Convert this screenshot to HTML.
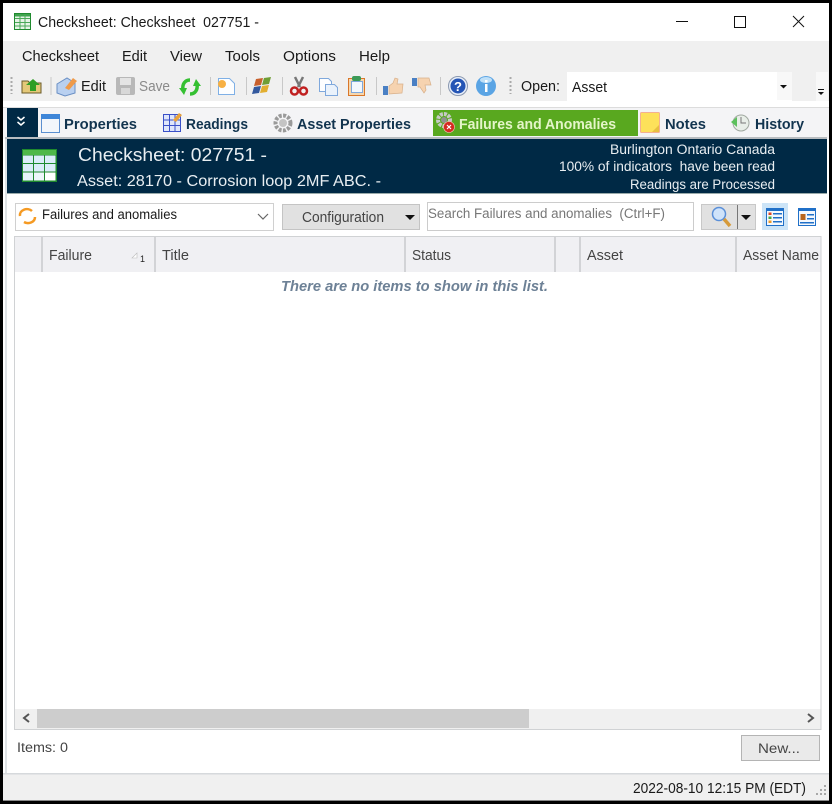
<!DOCTYPE html>
<html><head><meta charset="utf-8"><style>
html,body{margin:0;padding:0;background:#000;width:832px;height:804px;overflow:hidden}
svg{display:block;position:absolute;left:0;top:0;filter:blur(.35px)}
text{font-family:"Liberation Sans",sans-serif;fill:#1a1a1a;font-size:14.5px;white-space:pre}
.tab{font-weight:bold;fill:#12344f;font-size:15px}
.w{fill:#e8eef2}
.g{fill:#444}
</style></head><body>
<svg width="832" height="804" viewBox="0 0 832 804">
<rect width="832" height="804" fill="#000"/>
<rect x="3" y="3" width="826" height="798" fill="#fff"/>
<rect x="3" y="41" width="826" height="60" fill="#f0f0f0"/>
<rect x="3" y="107" width="826" height="32" fill="#f4f4f6"/>
<rect x="3" y="107" width="826" height="1" fill="#dcdcdc"/>
<rect x="5" y="137" width="822" height="2" fill="#b8bcc0"/>
<rect x="5" y="139" width="2" height="635" fill="#dfe3e6"/>
<rect x="7" y="139" width="820" height="54" fill="#002945"/>
<rect x="7" y="193" width="820" height="1" fill="#9aa"/>
<rect x="3" y="773" width="826" height="27" fill="#f0f0f0"/>
<rect x="3" y="773" width="826" height="1.5" fill="#d6d9dc"/>
<rect x="3" y="800" width="826" height="1" fill="#888"/>

<!-- title -->
<rect x="14.500" y="13.500" width="16" height="16" fill="#e6f3e6" stroke="#1f8a2e"/>
<rect x="15" y="14" width="15" height="2.500" fill="#3fa34d"/>
<path d="M15 18.500H30M15 22.500H30M15 26H30M20 14V29M25 14V29" stroke="#4aa858" fill="none"/>
<text x="38" y="27" textLength="221" lengthAdjust="spacingAndGlyphs">Checksheet: Checksheet  027751 -</text>
<path d="M676 21.500H688" stroke="#111"/>
<rect x="734.500" y="16.500" width="11" height="11" fill="none" stroke="#111"/>
<path d="M793 16L804 27M804 16L793 27" stroke="#111" fill="none"/>

<!-- menu -->
<text x="22" y="61" textLength="77" lengthAdjust="spacingAndGlyphs">Checksheet</text>
<text x="122" y="61" textLength="25" lengthAdjust="spacingAndGlyphs">Edit</text>
<text x="170" y="61" textLength="32" lengthAdjust="spacingAndGlyphs">View</text>
<text x="225" y="61" textLength="35" lengthAdjust="spacingAndGlyphs">Tools</text>
<text x="283" y="61" textLength="53" lengthAdjust="spacingAndGlyphs">Options</text>
<text x="359" y="61" textLength="31" lengthAdjust="spacingAndGlyphs">Help</text>

<!-- toolbar -->
<path d="M11.500 77V94" stroke="#aaa" stroke-dasharray="2 2" stroke-width="2"/>
<path d="M22 81h6l2 2h11v10H22z" fill="#e4c878" stroke="#6a5a28"/>
<path d="M30 91v-6h-4l7-6 7 6h-4v6z" fill="#2f9e25"/>
<rect x="50.500" y="77" width="1" height="18" fill="#c8c8c8"/>
<path d="M57 84l10-6 8 5v10l-10 3-8-3z" fill="#b9d0f0" stroke="#6a8fc4"/>
<path d="M65 88l8-10 4 3-8 9z" fill="#ee9a4a"/>
<text x="81" y="91" textLength="25" lengthAdjust="spacingAndGlyphs">Edit</text>
<rect x="116" y="77" width="19" height="18" rx="2" fill="#b8b8b8"/>
<rect x="120" y="78" width="11" height="7" fill="#e4e4e4"/>
<rect x="121" y="88" width="9" height="6" fill="#d8d8d8"/>
<text x="139" y="91" textLength="31" lengthAdjust="spacingAndGlyphs" style="fill:#8a8a8a">Save</text>
<path d="M190 80c-5 0-8 4-7 10" stroke="#35c032" stroke-width="3.500" fill="none"/>
<path d="M179 88l8 0-3 7z" fill="#35c032"/>
<path d="M190 94c5 0 8-4 7-10" stroke="#35c032" stroke-width="3.500" fill="none"/>
<path d="M201 86l-8 0 3-7z" fill="#35c032"/>
<rect x="210" y="77" width="1" height="18" fill="#c8c8c8"/>
<path d="M218.500 78.500h11l5 5v11h-16z" fill="#fdfeff" stroke="#7fb0e6"/>
<circle cx="222" cy="84" r="4" fill="#f7b043"/>
<rect x="246" y="77" width="1" height="18" fill="#c8c8c8"/>
<path d="M254 86l2-7 7-1-2 7z" fill="#c8602c"/><path d="M262 85l2-7 7-1-2 7z" fill="#6f9e35"/>
<path d="M252 94l2-7 7-1-2 7z" fill="#33599e"/><path d="M260 93l2-7 7-1-2 7z" fill="#e2ae30"/>
<rect x="282" y="77" width="1" height="18" fill="#c8c8c8"/>
<path d="M295 77l5 10M303 77l-5 10" stroke="#777" stroke-width="2.500" fill="none"/>
<circle cx="294.500" cy="91" r="3.500" fill="none" stroke="#c02020" stroke-width="2.500"/>
<circle cx="303.500" cy="91" r="3.500" fill="none" stroke="#c02020" stroke-width="2.500"/>
<path d="M319.500 78.500h9l3 3v10h-12z" fill="#fdfeff" stroke="#7fa8dc"/>
<path d="M325.500 84.500h9l3 3v8h-12z" fill="#eaf2fb" stroke="#7fa8dc"/>
<rect x="348.500" y="78.500" width="16" height="17" fill="#f6d7ae" stroke="#d9772a"/>
<rect x="351.500" y="81.500" width="11" height="11" fill="#f4f8fd" stroke="#7fa8dc"/>
<rect x="352" y="76" width="9" height="5" rx="2" fill="#3c9a58"/>
<rect x="376" y="77" width="1" height="18" fill="#c8c8c8"/>
<rect x="383" y="86" width="5" height="9" fill="#4a80c4"/>
<path d="M389 86l4-3 2-5 3 1-1 5h6l-1 9-13 1z" fill="#f6d3b0" stroke="#d8b08a" stroke-width=".7"/>
<rect x="412" y="78" width="5" height="8" fill="#4a80c4"/>
<path d="M418 78h11l2 7h-6l1 5-2 3-4-6h-2z" fill="#f6d3b0" stroke="#d8b08a" stroke-width=".7"/>
<rect x="440" y="77" width="1" height="18" fill="#c8c8c8"/>
<circle cx="458" cy="86" r="9.500" fill="#e8eef8" stroke="#8a98b0"/>
<circle cx="458" cy="86" r="7.500" fill="#2555b5"/>
<text x="454" y="91" style="fill:#fff;font-size:13px;font-weight:bold">?</text>
<circle cx="486" cy="86" r="10" fill="#5aa4e4"/>
<ellipse cx="486" cy="80" rx="6" ry="3" fill="#bfe0f8"/>
<rect x="485" y="84" width="2.500" height="8" fill="#fff"/>
<rect x="485" y="80" width="2.500" height="2.500" fill="#fff"/>
<path d="M510.500 77V94" stroke="#aaa" stroke-dasharray="2 2" stroke-width="2"/>
<text x="521" y="91" textLength="39" lengthAdjust="spacingAndGlyphs">Open:</text>
<rect x="567" y="72" width="225" height="29" fill="#fff"/>
<rect x="777" y="72" width="15" height="28" fill="#f8f8f8"/>
<text x="572" y="92" textLength="35" lengthAdjust="spacingAndGlyphs">Asset</text>
<path d="M780 85h7l-3.500 3.500z" fill="#111"/>
<rect x="816" y="72" width="12" height="29" fill="#f8f8f8"/>
<rect x="818" y="89" width="6" height="1" fill="#111"/><path d="M818 92h6l-3 3z" fill="#111"/>

<!-- tabs -->
<rect x="7" y="108" width="31" height="29" fill="#002945"/>
<path d="M17.500 117l3.500 3 3.500-3M17.500 122l3.500 3 3.500-3" stroke="#fff" stroke-width="1.500" fill="none"/>
<rect x="41.500" y="114.500" width="18" height="18" fill="#f2f6fb" stroke="#5a8fd0"/>
<rect x="41" y="114" width="19" height="5" fill="#3f86d8"/>
<text class="tab" x="64" y="129" textLength="73" lengthAdjust="spacingAndGlyphs">Properties</text>
<rect x="163.500" y="114.500" width="17" height="17" fill="#dfe6fb" stroke="#3a50c8"/>
<path d="M164 120H180M164 125.500H180M169.500 115V131M175 115V131" stroke="#3a50c8"/>
<path d="M173 120l6-7 3 2-6 7z" fill="#e9a23a"/>
<text class="tab" x="186" y="129" textLength="62" lengthAdjust="spacingAndGlyphs">Readings</text>
<circle cx="283" cy="123" r="7.500" fill="none" stroke="#9a9a9a" stroke-width="4" stroke-dasharray="3 1.400"/>
<circle cx="283" cy="123" r="4" fill="#c4c4c4"/>
<text class="tab" x="297" y="129" textLength="114" lengthAdjust="spacingAndGlyphs">Asset Properties</text>
<rect x="433" y="110" width="205" height="26" fill="#59a81f"/>
<circle cx="444" cy="120" r="6" fill="none" stroke="#c6cac6" stroke-width="4" stroke-dasharray="3 1"/>
<circle cx="444" cy="120" r="3" fill="#8f938f"/>
<circle cx="449" cy="127" r="5.500" fill="#d42a20" stroke="#f3c0b0" stroke-width=".6"/>
<path d="M447 125l4 4M451 125l-4 4" stroke="#fff" stroke-width="1.200"/>
<text class="tab" x="459" y="129" textLength="157" lengthAdjust="spacingAndGlyphs" style="fill:#e4f5c8">Failures and Anomalies</text>
<rect x="640.500" y="112.500" width="19" height="20" rx="1" fill="#fde15a" stroke="#f4b090"/>
<path d="M652 132l7-7v7z" fill="#e8c040"/>
<text class="tab" x="665" y="129" textLength="41" lengthAdjust="spacingAndGlyphs">Notes</text>
<circle cx="741" cy="123" r="8" fill="#e8eee8" stroke="#a0a8a0"/>
<path d="M741 117v6h5" stroke="#777" fill="none"/>
<path d="M731 122l6-5v10z" fill="#5cc05c"/>
<text class="tab" x="755" y="129" textLength="49" lengthAdjust="spacingAndGlyphs">History</text>

<!-- navy header -->
<rect x="22" y="149" width="35" height="33" fill="#1f8a2e"/>
<rect x="23" y="150" width="33" height="5" fill="#4fb848"/>
<g fill="#dcecf8"><rect x="23" y="155.500" width="10" height="7.500"/><rect x="34" y="155.500" width="10" height="7.500"/><rect x="45" y="155.500" width="10.500" height="7.500"/>
<rect x="23" y="164" width="10" height="7.500"/><rect x="34" y="164" width="10" height="7.500"/><rect x="45" y="164" width="10.500" height="7.500"/>
<rect x="23" y="172.500" width="10" height="8" fill="#e8f4fa"/><rect x="34" y="172.500" width="10" height="8" fill="#eef6fa"/><rect x="45" y="172.500" width="10.500" height="8" fill="#fff"/></g>
<text class="w" x="78" y="161" style="font-size:18.500px" textLength="189" lengthAdjust="spacingAndGlyphs">Checksheet: 027751 -</text>
<text class="w" x="77" y="186" style="font-size:15.500px" textLength="304" lengthAdjust="spacingAndGlyphs">Asset: 28170 - Corrosion loop 2MF ABC. -</text>
<text class="w" x="610" y="154" style="font-size:13.500px" textLength="165" lengthAdjust="spacingAndGlyphs">Burlington Ontario Canada</text>
<text class="w" x="559" y="171" style="font-size:13.500px" textLength="216" lengthAdjust="spacingAndGlyphs">100% of indicators  have been read</text>
<text class="w" x="630" y="189" style="font-size:13.500px" textLength="145" lengthAdjust="spacingAndGlyphs">Readings are Processed</text>

<!-- filter row -->
<rect x="15.500" y="203.500" width="258" height="27" fill="#fff" stroke="#d0d0d0"/>
<path d="M32 211a7 6 0 0 0-12 5M24 222a7 6 0 0 0 11-5" stroke="#f59a23" stroke-width="2.500" fill="none"/>
<text x="42" y="219" style="font-size:13.500px" textLength="135" lengthAdjust="spacingAndGlyphs">Failures and anomalies</text>
<path d="M258 214l5 5 5-5" stroke="#666" fill="none" stroke-width="1.200"/>
<rect x="282.500" y="204.500" width="137" height="25" fill="#e1e1e1" stroke="#c4c4c4"/>
<text x="302" y="222" class="g" textLength="82" lengthAdjust="spacingAndGlyphs">Configuration</text>
<path d="M405 215h10l-5 5z" fill="#111"/>
<rect x="427.500" y="202.500" width="266" height="28" fill="#fff" stroke="#ccc"/>
<text x="428" y="218" style="font-size:13.500px;fill:#777" textLength="237" lengthAdjust="spacingAndGlyphs">Search Failures and anomalies  (Ctrl+F)</text>
<rect x="701.500" y="204.500" width="54" height="25" fill="#e1e1e1" stroke="#c8c8c8"/>
<rect x="737" y="205" width="1" height="24" fill="#777"/>
<circle cx="719" cy="214" r="6.500" fill="#cfe3fa" stroke="#5a8fd8" stroke-width="1.500"/>
<path d="M724 219l6 7" stroke="#d69a3a" stroke-width="3.500"/>
<path d="M741 215h10l-5 5z" fill="#111"/>
<rect x="762" y="203" width="26" height="27" fill="#cce4f7"/>
<rect x="766.500" y="208.500" width="17" height="17" fill="#f4f8fd" stroke="#2070c8"/>
<rect x="766" y="208" width="18" height="3" fill="#2070c8"/>
<g fill="#2070c8"><rect x="773" y="213" width="9" height="1.500"/><rect x="773" y="217" width="9" height="1.500"/><rect x="773" y="221" width="9" height="1.500"/></g>
<rect x="768.500" y="212.500" width="3" height="2.500" fill="#d42"/><rect x="768.500" y="216.500" width="3" height="2.500" fill="#4a4"/><rect x="768.500" y="220.500" width="3" height="2.500" fill="#e92"/>
<rect x="798.500" y="208.500" width="17" height="17" fill="#f4f8fd" stroke="#2070c8"/>
<rect x="798" y="208" width="18" height="3" fill="#2070c8"/>
<rect x="800.500" y="214" width="5" height="6" fill="#b8651c"/>
<g fill="#2070c8"><rect x="807" y="214" width="7" height="1.500"/><rect x="807" y="218" width="7" height="1.500"/><rect x="800" y="222" width="14" height="1.500"/></g>

<!-- grid -->
<rect x="15" y="237" width="805.500" height="35" fill="#f0f0f3"/>
<rect x="14.500" y="236.500" width="806.500" height="493" fill="none" stroke="#d0d2d4"/>
<g fill="#b4b6b8"><rect x="41.500" y="237" width="1" height="35"/><rect x="154.500" y="237" width="1" height="35"/><rect x="404.500" y="237" width="1" height="35"/><rect x="554.500" y="237" width="1" height="35"/><rect x="579.500" y="237" width="1" height="35"/><rect x="735.500" y="237" width="1" height="35"/></g>
<text class="g" x="49" y="260" textLength="43" lengthAdjust="spacingAndGlyphs">Failure</text>
<path d="M132 258l5-5v5z" fill="#fff" stroke="#bbb" stroke-width=".6"/>
<text x="140" y="262" style="font-size:9px;fill:#222">1</text>
<text class="g" x="162" y="260" textLength="27" lengthAdjust="spacingAndGlyphs">Title</text>
<text class="g" x="412" y="260" textLength="39" lengthAdjust="spacingAndGlyphs">Status</text>
<text class="g" x="587" y="260" textLength="36" lengthAdjust="spacingAndGlyphs">Asset</text>
<text class="g" x="743" y="260" textLength="76" lengthAdjust="spacingAndGlyphs">Asset Name</text>
<text x="281" y="291" style="font-weight:bold;font-style:italic;fill:#6d8196;font-size:14.500px" textLength="267" lengthAdjust="spacingAndGlyphs">There are no items to show in this list.</text>
<rect x="15" y="709" width="805.500" height="20" fill="#f0f0f0"/>
<rect x="37" y="709" width="492" height="19" fill="#cdcdcd"/>
<path d="M29 714l-5 4 5 4" stroke="#555" stroke-width="2" fill="none"/>
<path d="M808 714l5 4-5 4" stroke="#555" stroke-width="2" fill="none"/>
<text x="17" y="752" style="font-size:13.500px" class="g" textLength="51" lengthAdjust="spacingAndGlyphs">Items: 0</text>
<rect x="741.500" y="735.500" width="78" height="25" fill="#eaeaea" stroke="#b4b4b4"/>
<text x="758" y="753" class="g" style="font-size:13.500px" textLength="42" lengthAdjust="spacingAndGlyphs">New...</text>
<text x="633" y="793" textLength="173" lengthAdjust="spacingAndGlyphs">2022-08-10 12:15 PM (EDT)</text>
<g fill="#a8a8a8"><rect x="824" y="785" width="2" height="2"/><rect x="820" y="789" width="2" height="2"/><rect x="824" y="789" width="2" height="2"/><rect x="816" y="793" width="2" height="2"/><rect x="820" y="793" width="2" height="2"/><rect x="824" y="793" width="2" height="2"/></g>
</svg>
</body></html>
